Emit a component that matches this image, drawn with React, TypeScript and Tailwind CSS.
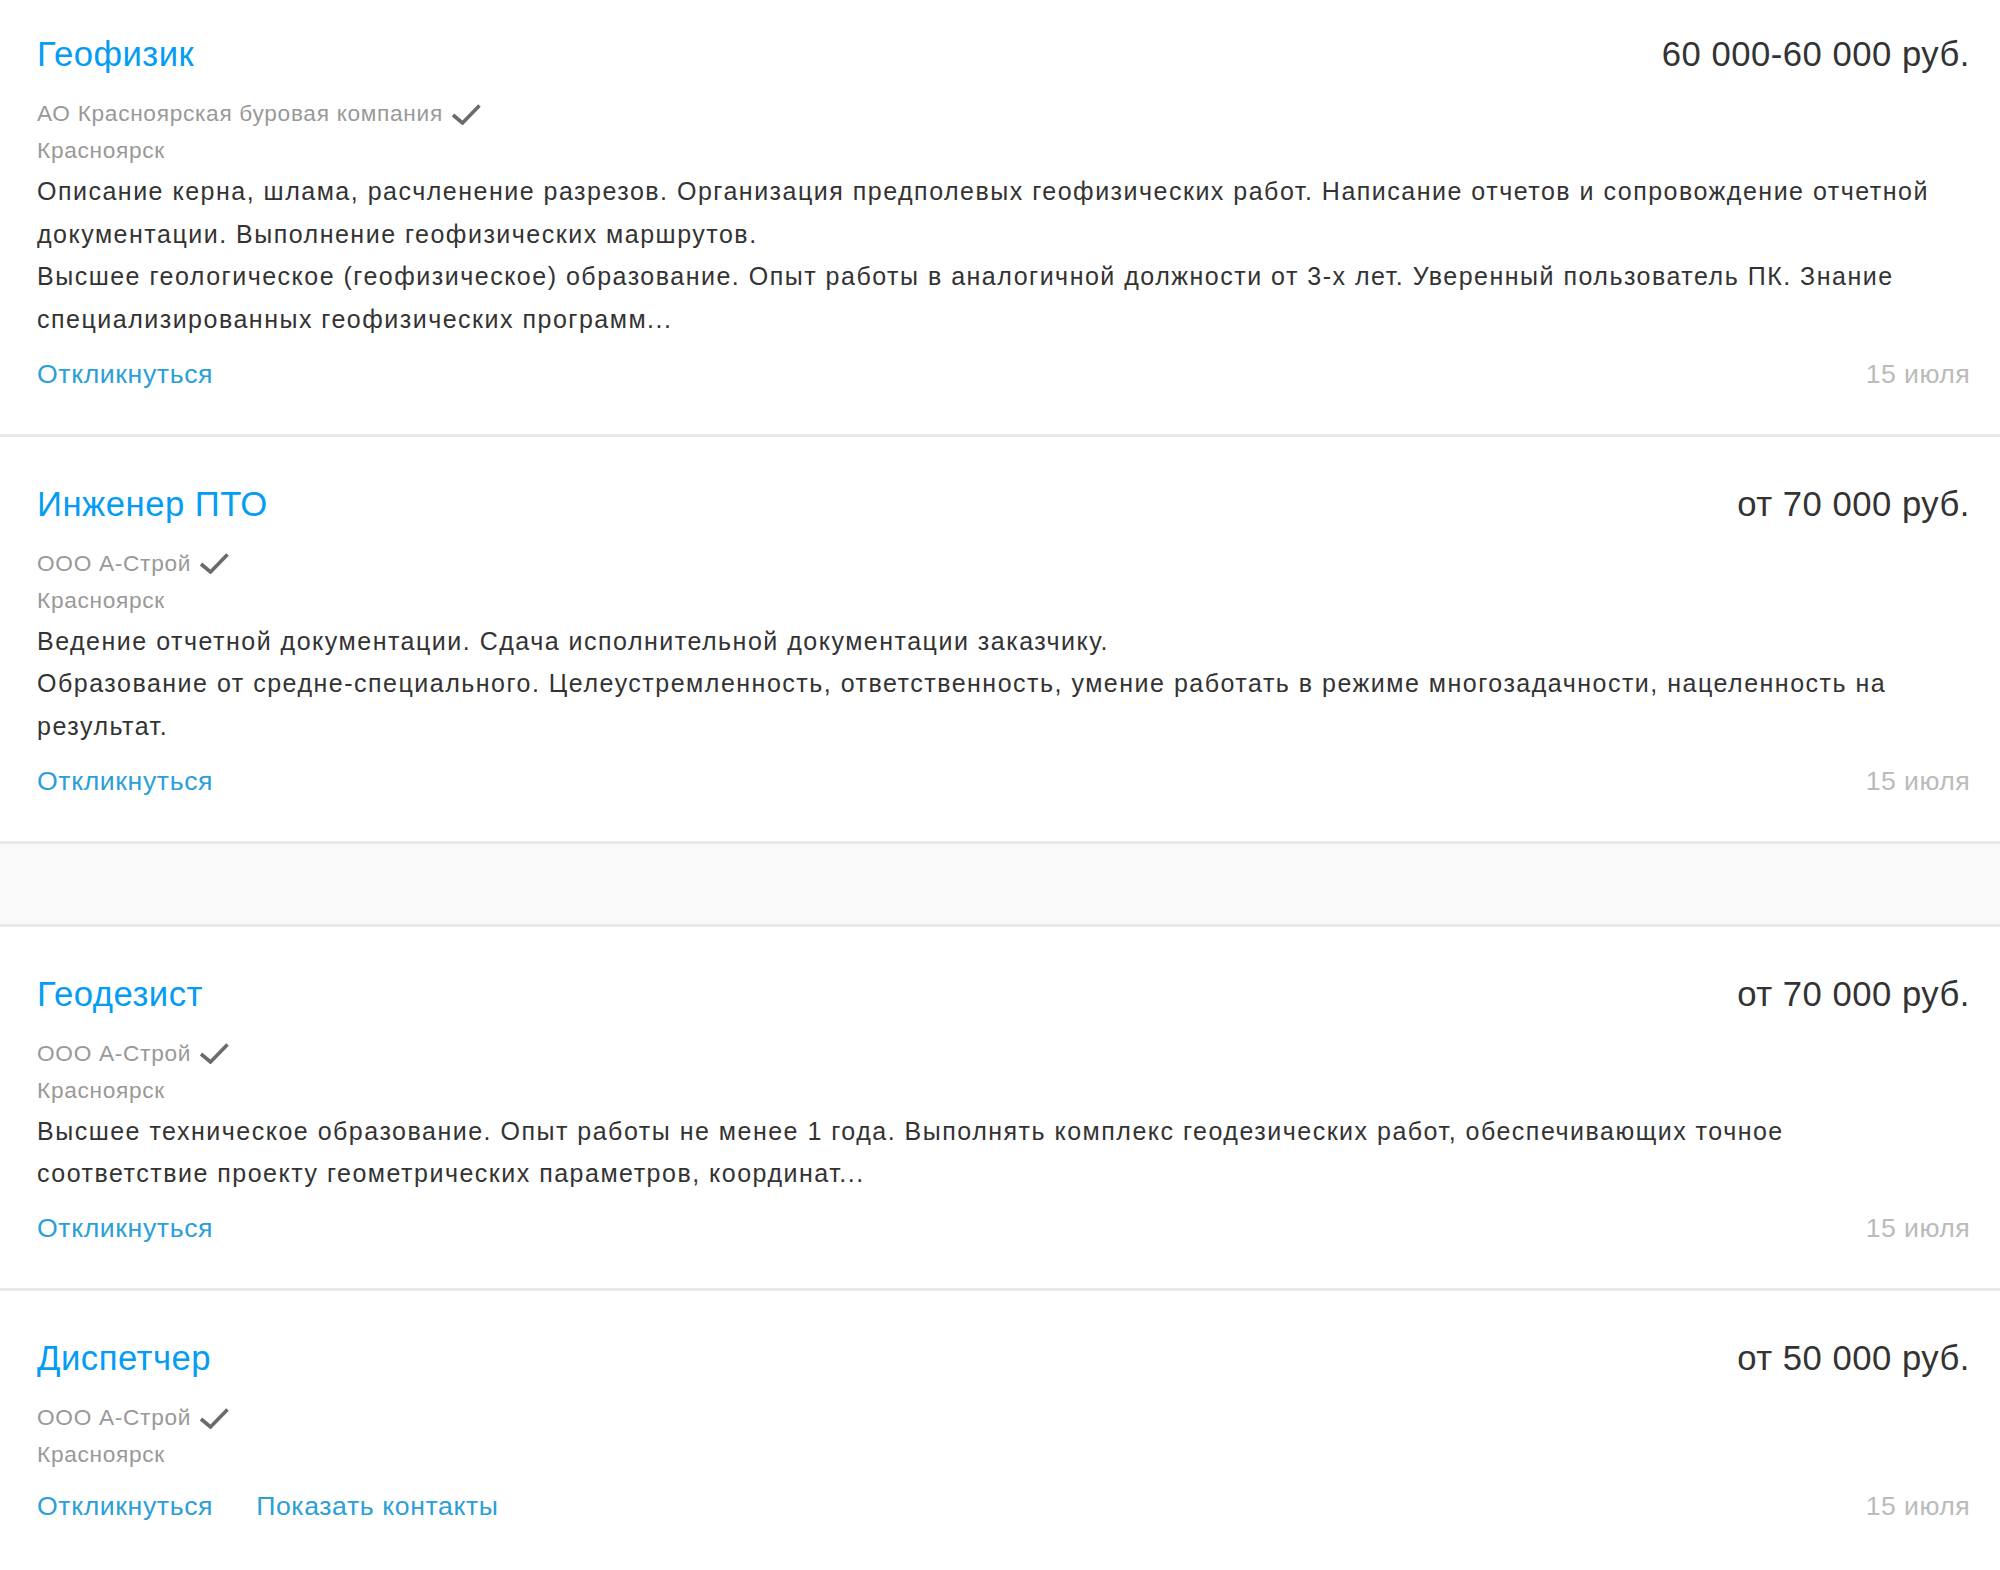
import React from 'react';

interface Vacancy {
  title: string;
  salary: string;
  company: string;
  city: string;
  text: string[];
  date: string;
  contacts?: boolean;
}

const vacancies: Vacancy[] = [
  {
    title: 'Геофизик',
    salary: '60 000-60 000 руб.',
    company: 'АО Красноярская буровая компания',
    city: 'Красноярск',
    text: [
      'Описание керна, шлама, расчленение разрезов. Организация предполевых геофизических работ. Написание отчетов и сопровождение отчетной документации. Выполнение геофизических маршрутов.',
      'Высшее геологическое (геофизическое) образование. Опыт работы в аналогичной должности от 3-х лет. Уверенный пользователь ПК. Знание специализированных геофизических программ...',
    ],
    date: '15 июля',
  },
  {
    title: 'Инженер ПТО',
    salary: 'от 70 000 руб.',
    company: 'ООО А-Строй',
    city: 'Красноярск',
    text: [
      'Ведение отчетной документации. Сдача исполнительной документации заказчику.',
      'Образование от средне-специального. Целеустремленность, ответственность, умение работать в режиме многозадачности, нацеленность на результат.',
    ],
    date: '15 июля',
  },
  {
    title: 'Геодезист',
    salary: 'от 70 000 руб.',
    company: 'ООО А-Строй',
    city: 'Красноярск',
    text: [
      'Высшее техническое образование. Опыт работы не менее 1 года. Выполнять комплекс геодезических работ, обеспечивающих точное соответствие проекту геометрических параметров, координат...',
    ],
    date: '15 июля',
  },
  {
    title: 'Диспетчер',
    salary: 'от 50 000 руб.',
    company: 'ООО А-Строй',
    city: 'Красноярск',
    text: [],
    date: '15 июля',
    contacts: true,
  },
];

const Verified = () => (
  <svg width="30" height="22" viewBox="0 0 30 22" className="ml-[8px] shrink-0">
    <path d="M2 12 L11.5 20 L28.5 2.5" fill="none" stroke="#6b6b6b" strokeWidth="3.6" />
  </svg>
);

type Place = 'first' | 'middle' | 'last';

const boxClass: Record<Place, string> = {
  first: 'border-b-[3px] border-[#e9e9e9] pl-[37px] pr-[30px] pt-[31px] pb-[42px]',
  middle: 'border-b-[3px] border-[#e9e9e9] pl-[37px] pr-[30px] pt-[44px] pb-[42px]',
  last: 'pl-[37px] pr-[30px] pt-[44px] pb-[20px]',
};

const VacancyCard: React.FC<{ item: Vacancy; place?: Place }> = ({ item, place = 'middle' }) => (
  <div className={boxClass[place]}>
    <div className="flex justify-between text-[34.67px] leading-[46px] tracking-[0.5px]">
      <a href="#" className="text-[#059cf3]">{item.title}</a>
      <span className="text-[#333]">{item.salary}</span>
    </div>
    <div className="mt-[18px] flex items-center text-[22.67px] leading-[37px] tracking-[0.7px] text-[#999]">
      <span>{item.company}</span>
      <Verified />
    </div>
    <div className="text-[22.67px] leading-[37px] tracking-[0.7px] text-[#999]">{item.city}</div>
    {item.text.length > 0 && (
      <div className="mt-[1px] mr-[18px] text-[25px] leading-[42.67px] tracking-[1.5px] text-[#333]">
        {item.text.map((p, i) => (
          <p key={i}>{p}</p>
        ))}
      </div>
    )}
    <div className="mt-[15px] flex justify-between text-[26.67px] leading-[36px]">
      <div className="flex gap-[43px] tracking-[0.6px] text-[#2c9fd7]">
        <a href="#">Откликнуться</a>
        {item.contacts && <a href="#">Показать контакты</a>}
      </div>
      <span className="tracking-[0.4px] text-[#bbb]">{item.date}</span>
    </div>
  </div>
);

export default function App() {
  return (
    <div className="min-h-screen w-full bg-white font-['Liberation_Sans',Arial,sans-serif]">
      <VacancyCard item={vacancies[0]} place="first" />
      <VacancyCard item={vacancies[1]} />
      <div className="h-[83px] border-b-[3px] border-[#e9e9e9] bg-[#f9f9f9]" />
      <VacancyCard item={vacancies[2]} />
      <VacancyCard item={vacancies[3]} place="last" />
    </div>
  );
}
